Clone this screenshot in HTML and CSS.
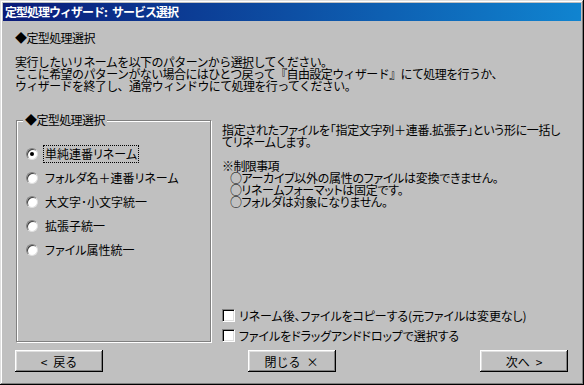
FILE: index.html
```html
<!DOCTYPE html>
<html lang="ja">
<head>
    <meta charset="UTF-8">
    <title>定型処理ウィザード: サービス選択</title>
    <link rel="stylesheet" href="styles.css">
</head>
<body>
    <div class="ventana">
        <div class="barra-titulo">定型処理ウィザード:&ensp;サービス選択</div>

        <div class="contenido">
            <div class="encabezado">◆定型処理選択</div>
            <p class="intro">
                実行したいリネームを以下のパターンから選択してください。<br>
                ここに希望のパターンがない場合にはひとつ戻って『自由設定ウィザード』にて処理を行うか、<br>
                ウィザードを終了し、通常ウィンドウにて処理を行ってください。
            </p>

            <div class="principal">
                <!-- grupo de opciones -->
                <fieldset class="grupo">
                    <legend>◆定型処理選択</legend>
                    <label class="opcion"><span class="radio marcado"></span><span class="texto foco">単純連番リネーム</span></label>
                    <label class="opcion"><span class="radio"></span><span class="texto">フォルダ名＋連番リネーム</span></label>
                    <label class="opcion"><span class="radio"></span><span class="texto">大文字･小文字統一</span></label>
                    <label class="opcion"><span class="radio"></span><span class="texto">拡張子統一</span></label>
                    <label class="opcion"><span class="radio"></span><span class="texto">ファイル属性統一</span></label>
                </fieldset>

                <div class="detalle">
                    <div class="descripcion">
                        <span class="prop">指定されたファイルを「指定文字列＋連番.拡張子」という形に一括し</span><br>
                        <span class="prop">てリネームします。</span><br>
                        <br>
                        ※制限事項<br>
                        <span class="sangria">○<span class="prop">アーカイブ以外の属性のファイルは変換できません。</span></span><br>
                        <span class="sangria">○<span class="prop">リネームフォーマットは固定です。</span></span><br>
                        <span class="sangria">○<span class="prop">フォルダは対象になりません。</span></span>
                    </div>
                    <div class="casillas">
                        <label class="casilla"><span class="caja"></span>リネーム後、ファイルをコピーする(元ファイルは変更なし)</label>
                        <label class="casilla"><span class="caja"></span>ファイルをドラッグアンドドロップで選択する</label>
                    </div>
                </div>
            </div>

            <div class="botones">
                <button>&lt;&ensp;戻る</button>
                <button>閉じる&ensp;×</button>
                <button>次へ&ensp;&gt;</button>
            </div>
        </div>
    </div>
</body>
</html>
```

FILE: styles.css
```css
html {
    background-color: #c0c0c0;
}
body {
    margin: 0;
    font-family: "Noto Sans CJK JP", "Noto Sans", sans-serif;
    font-size: 12px;
    line-height: 12px;
    letter-spacing: -0.6px;
    color: #000;
}
.ventana {
    box-sizing: border-box;
    width: 584px;
    height: 385px;
    padding: 3px;
    background-color: #c0c0c0;
    box-shadow: inset -1px -1px 0 #000, inset 1px 1px 0 #dfdfdf,
                inset -2px -2px 0 #808080, inset 2px 2px 0 #fff;
}
.barra-titulo {
    height: 18px;
    line-height: 18px;
    padding-left: 2px;
    color: #fff;
    font-weight: bold;
    letter-spacing: -1px;
    background: linear-gradient(90deg, #0a1a78, #1084d0);
}
.contenido {
    padding: 11px 10px 0 12px;
}
.encabezado {
    height: 12px;
}
.intro {
    margin: 12px 0 0 0;
}
.principal {
    display: flex;
    gap: 11px;
    margin-top: 22px;
    height: 228px;
}
.grupo {
    box-sizing: border-box;
    width: 195px;
    height: 228px;
    margin: 0 0 0 1px;
    padding: 16px 0 0 9px;
    border: 1px solid #808080;
    box-shadow: inset 1px 1px 0 #fff, 1px 1px 0 #fff;
    font-feature-settings: "palt";
    letter-spacing: 0;
}
.grupo legend {
    margin-left: -3px;
    padding: 0 2px;
    background-color: #c0c0c0;
    font-feature-settings: normal;
    letter-spacing: -0.6px;
}
.opcion {
    display: flex;
    align-items: center;
    height: 24px;
}
.radio {
    box-sizing: border-box;
    width: 12px;
    height: 12px;
    margin-right: 5px;
    border-radius: 50%;
    background-color: #fff;
    border: 1px solid;
    border-color: #808080 #dfdfdf #dfdfdf #808080;
    box-shadow: inset 1px 1px 0 #404040;
    display: flex;
    align-items: center;
    justify-content: center;
}
.radio.marcado::after {
    content: "";
    width: 4px;
    height: 4px;
    border-radius: 50%;
    background-color: #000;
}
.texto {
    padding: 2px 1px;
    border: 1px dotted transparent;
}
.texto.foco {
    border-color: #000;
}
.detalle {
    display: flex;
    flex-direction: column;
    justify-content: space-between;
    flex: 1;
    padding-top: 10px;
}
.descripcion {
    white-space: nowrap;
}
.prop {
    font-feature-settings: "palt";
    letter-spacing: -0.3px;
}
.sangria {
    padding-left: 8px;
}
.casillas {
    display: flex;
    flex-direction: column;
    gap: 7px;
    font-feature-settings: "palt";
    letter-spacing: -0.1px;
    white-space: nowrap;
}
.casilla {
    display: flex;
    align-items: center;
    height: 13px;
}
.caja {
    box-sizing: border-box;
    width: 13px;
    height: 13px;
    margin-right: 4px;
    background-color: #fff;
    border: 1px solid;
    border-color: #808080 #fff #fff #808080;
    box-shadow: inset 1px 1px 0 #000, inset -1px -1px 0 #dfdfdf;
}
.botones {
    display: flex;
    justify-content: space-between;
    margin-top: 8px;
    padding-right: 3px;
}
button {
    width: 88px;
    height: 22px;
    padding: 0;
    font-family: inherit;
    font-size: 12px;
    letter-spacing: 0;
    color: #000;
    background-color: #c0c0c0;
    border: none;
    border-radius: 0;
    box-shadow: inset -1px -1px 0 #000, inset 1px 1px 0 #fff,
                inset -2px -2px 0 #808080, inset 2px 2px 0 #dfdfdf;
}
```
